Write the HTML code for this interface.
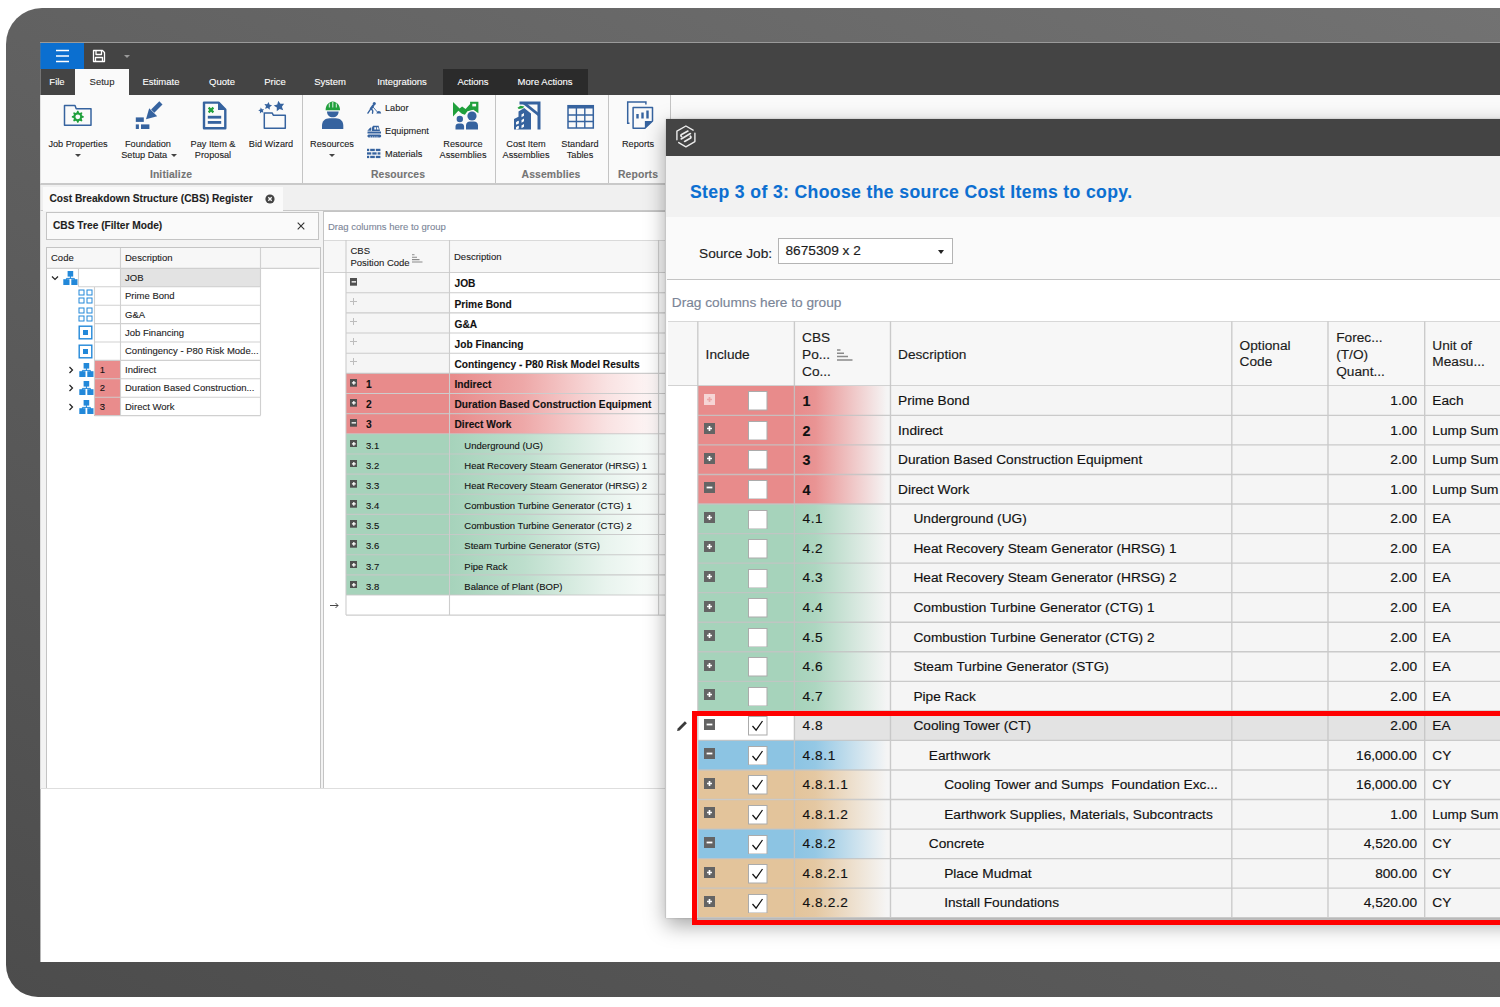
<!DOCTYPE html>
<html><head><meta charset="utf-8"><title>CBS Register</title>
<style>
*{box-sizing:border-box;margin:0;padding:0}
html,body{width:1500px;height:1007px;overflow:hidden;background:#fff}
body{position:relative;font-family:"Liberation Sans",sans-serif;font-size:9.5px;color:#1c1c1c}
.abs,.abs *{position:absolute}
#frame{left:6px;top:8px;width:1494px;height:989px;border-radius:36px 0 0 32px;background:linear-gradient(27deg,#4c4c4c,#727272)}
#screen{left:0;top:0;width:1500px;height:1007px;background:#fff;clip-path:inset(43px 0 45px 40.4px)}
#screen>div,#screen>span{position:absolute}
.t{position:absolute;white-space:nowrap;line-height:12px;-webkit-text-stroke:.1px currentColor}
.c{transform:translateX(-50%);text-align:center}
#screen .tab{color:#fff}
.rsep{width:1px;top:95px;height:88px;background:#c4c4c4}
.dd{width:0;height:0;border:3px solid transparent;border-top:3px solid #444;border-bottom:0}
#screen .gl{color:#747474;font-size:10.4px;letter-spacing:.12px}
.d{font-size:13.7px;line-height:16px;-webkit-text-stroke:.16px currentColor}
.b{font-weight:bold;font-size:10.2px}
</style></head><body>
<div id="frame" class="abs"></div>
<div class="abs" style="left:40px;top:42px;width:1460px;height:1px;background:#9a9a9a"></div>
<div id="screen" class="abs">
<div style="left:40px;top:43px;width:1460px;height:52px;background:#444"></div>
<div style="left:40px;top:43px;width:44px;height:26px;background:#0b6fd0"></div>
<svg style="left:55px;top:49px" width="15" height="14" viewBox="0 0 15 14"><path d="M1 1.5h13M1 7h13M1 12.5h13" stroke="#fff" stroke-width="1.6" fill="none"/></svg>
<svg style="left:92px;top:49px" width="14" height="14" viewBox="0 0 14 14"><path d="M1.5 1.5h9l2 2v9h-11z M4 1.5v4h5.5v-4 M3.5 12.5v-4h7v4" stroke="#fff" stroke-width="1.3" fill="none" stroke-linejoin="round"/></svg>
<div style="left:124px;top:55px;width:0;height:0;border:3px solid transparent;border-top:3px solid #9a9a9a;border-bottom:0"></div>
<div style="left:443px;top:69px;width:145px;height:26px;background:#2b2b2b"></div>
<div style="left:75px;top:69px;width:54px;height:26px;background:#fafafa"></div>
<span class="t c tab" style="left:57px;top:76px">File</span>
<span class="t c tab" style="left:102px;top:76px;color:#2b2b2b">Setup</span>
<span class="t c tab" style="left:161px;top:76px">Estimate</span>
<span class="t c tab" style="left:222px;top:76px">Quote</span>
<span class="t c tab" style="left:275px;top:76px">Price</span>
<span class="t c tab" style="left:330px;top:76px">System</span>
<span class="t c tab" style="left:402px;top:76px">Integrations</span>
<span class="t c tab" style="left:473px;top:76px">Actions</span>
<span class="t c tab" style="left:545px;top:76px">More Actions</span>

<div style="left:40px;top:95px;width:1460px;height:89px;background:#fafafa"></div>
<div style="left:40px;top:183px;width:1460px;height:2px;background:#c9c9c9"></div>
<div class="rsep" style="left:302px"></div><div class="rsep" style="left:495px"></div><div class="rsep" style="left:608px"></div><div class="rsep" style="left:670px"></div>
<svg style="left:41px;top:95px" width="640" height="70" viewBox="41 95 640 70">
<!-- job properties -->
<path d="M64.5 105.5h10.5l1.2 3.2h14.8v16.6h-26.5z" fill="none" stroke="#36639f" stroke-width="1.5" stroke-linejoin="round"/>
<path d="M83.77,116.21 L83.77,117.39 L82.01,118.08 L81.68,118.87 L82.44,120.61 L81.61,121.44 L79.87,120.68 L79.08,121.01 L78.39,122.77 L77.21,122.77 L76.52,121.01 L75.73,120.68 L73.99,121.44 L73.16,120.61 L73.92,118.87 L73.59,118.08 L71.83,117.39 L71.83,116.21 L73.59,115.52 L73.92,114.73 L73.16,112.99 L73.99,112.16 L75.73,112.92 L76.52,112.59 L77.21,110.83 L78.39,110.83 L79.08,112.59 L79.87,112.92 L81.61,112.16 L82.44,112.99 L81.68,114.73 L82.01,115.52Z" fill="#20a03c"/><circle cx="77.8" cy="116.8" r="2.4" fill="#fafafa"/>
<!-- foundation -->
<path d="M159.3 101.2l3.2 3.2-8.2 8.4-3.2-3.2z" fill="#36639f"/><path d="M146 119.2l3.2-11 8 8z" fill="#36639f"/>
<rect x="135.8" y="117.4" width="8" height="4.5" fill="#36639f"/><rect x="135.8" y="124.4" width="3.1" height="4.6" fill="#36639f"/><rect x="141" y="124.4" width="8.4" height="4.6" fill="#36639f"/>
<!-- pay item -->
<path d="M204 102.6h14.5l6.8 7v18.6h-21.3z" fill="#fafafa" stroke="#36639f" stroke-width="2.4" stroke-linejoin="round"/>
<path d="M218 102v8h7.5z" fill="#36639f"/>
<path d="M208.6 107.6l4.8 4.8m0-4.8l-4.8 4.8" stroke="#20a03c" stroke-width="2.2"/>
<rect x="207.8" y="115.8" width="13.4" height="2.8" fill="#36639f"/><rect x="207.8" y="121" width="13.4" height="2.8" fill="#36639f"/>
<!-- bid wizard -->
<path d="M264.3 112.9h7.800l1.200 2.300h12v13.100h-21z" fill="none" stroke="#36639f" stroke-width="1.500" stroke-linejoin="round"/>
<path d="M278.23,100.79 L280.38,103.87 L284.14,103.67 L281.87,106.68 L283.23,110.19 L279.67,108.96 L276.75,111.33 L276.82,107.57 L273.65,105.52 L277.26,104.42Z" fill="#36639f"/><path d="M268.71,101.96 L269.44,104.61 L272.06,105.43 L269.77,106.94 L269.80,109.69 L267.65,107.97 L265.05,108.85 L266.02,106.28 L264.38,104.08 L267.12,104.20Z" fill="#36639f"/><path d="M260.76,107.55 L261.96,109.25 L264.04,109.14 L262.79,110.81 L263.53,112.75 L261.56,112.08 L259.94,113.39 L259.98,111.30 L258.23,110.17 L260.22,109.56Z" fill="#36639f"/>
<!-- resources worker -->
<path d="M325.6 110.2c0-4.5 2.6-8.2 7.2-8.6 4.6.4 7.2 4.1 7.2 8.6z" fill="#20a03c"/><path d="M329.3 103.5v4M332.8 102v5.5M336.3 103.5v4" stroke="#fafafa" stroke-width="0.9"/>
<path d="M327 111.4h11.6c0 3.6-2.6 5.8-5.8 5.8s-5.800-2.200-5.800-5.800z" fill="#36639f"/>
<path d="M322 129v-3.500c0-4.500 3.200-7.300 7.500-7.300h6.300c4.300 0 7.500 2.800 7.500 7.300v3.500z" fill="#36639f"/>
<!-- labor -->
<circle cx="374.300" cy="103.600" r="1.550" fill="#36639f"/><path d="M373.300 105.400L370.900 108.700" stroke="#36639f" stroke-width="2.300" stroke-linecap="round" fill="none"/><path d="M370.900 108.700L367.900 113.100M371.200 108.500L372.800 110.800L372.500 113.200" stroke="#36639f" stroke-width="1.400" stroke-linecap="round" stroke-linejoin="round" fill="none"/><path d="M372.400 106.300L377.600 112.200" stroke="#36639f" stroke-width=".9" fill="none"/><path d="M376.300 113.400h4.900q-.4-2.400-2.600-2.300-1.700.2-2.300 2.300z" fill="#36639f"/>
<!-- equipment -->
<path d="M367.500 131.500h13.500v1.900h-13.500z" fill="#36639f"/><path d="M368.700 134.400h11.200c1.700 0 1.700 3 0 3h-11.200c-1.700 0-1.700-3 0-3z" fill="#36639f"/><path d="M369.800 137h9" stroke="#fafafa" stroke-width=".8" stroke-dasharray="1.200 1"/>
<path d="M372 131v-3.500l1-1.700h5.600l1.400 5.200z" fill="#36639f"/><path d="M374.300 127.200h1.900v2.300h-1.900z M377 127.200h1.200l.6 2.300H377z" fill="#fafafa"/><path d="M367.300 130.800l3-3.400 1 .3v3.100z" fill="#36639f"/>
<!-- materials -->
<g fill="#36639f"><rect x="367" y="148.800" width="2.200" height="2.300"/><rect x="370.200" y="148.800" width="4.600" height="2.300"/><rect x="375.800" y="148.800" width="4.600" height="2.300"/>
<rect x="367" y="152.300" width="4.300" height="2.300"/><rect x="372.300" y="152.300" width="4.300" height="2.300"/><rect x="377.600" y="152.300" width="2.800" height="2.300"/>
<rect x="367" y="155.800" width="2.200" height="2.300"/><rect x="370.200" y="155.800" width="4.600" height="2.300"/><rect x="375.800" y="155.800" width="4.600" height="2.300"/></g>
<!-- resource assemblies -->
<path d="M453 102l6.600 6.500 2.500-2 3.500 2.500 4.500-5v-2.200h8.300v11.500l-5-3.500-6 1.500-2.500 3.500-3-1-3.500-3-5.400 5.700z" fill="#20a03c"/><rect x="472.300" y="103.800" width="3.800" height="2.600" fill="#fafafa"/>
<circle cx="472" cy="116" r="5.600" fill="#fafafa"/><circle cx="472" cy="116" r="4.600" fill="#36639f"/><circle cx="459.800" cy="119" r="3.200" fill="#36639f"/>
<path d="M455.500 129.400v-3c0-2 1.300-3 3-3h2.600c1.700 0 3 1 3 3v3z M466 129.400v-4c0-2.600 1.800-4 4-4h4c2.200 0 4 1.400 4 4v4z" fill="#36639f"/>
<!-- cost item assemblies -->
<path d="M519.500 101.400h21v28h-3v-25h-18z" fill="#36639f"/><path d="M521 102.500l17 13.500v-3.600l-12.500-10z" fill="#36639f"/>
<path d="M514 129.400v-10.500l4.500-2.200v-5.200l5.700-3.500 6.800 5.500v15.900z" fill="#36639f"/>
<g fill="#fafafa" transform="skewY(-28)"><rect x="516" y="396.500" width="2.400" height="2.300"/><rect x="516" y="401.500" width="2.400" height="2.300"/></g>
<g fill="#fafafa"><path d="M521.500 114.500l2.500-1.500v2.700l-2.500 1.500z M521.500 120l2.500-1.500v2.700l-2.500 1.500z M521.500 125.500l2.500-1.500v2.700l-2.500 1.500z M516.500 122l2.300-1.300v2.700l-2.300 1.300z M516.500 127l2.300-1.300v2.700l-2.300 1.300z"/></g>
<path d="M517.500 107.800l3-2 3.800.6-1.500 1.800-4 .8z" fill="#20a03c"/>
<!-- standard tables -->
<rect x="568" y="105.700" width="25.300" height="22.300" fill="#fafafa" stroke="#36639f" stroke-width="1.500"/><rect x="568" y="105.200" width="25.300" height="3.300" fill="#36639f"/>
<path d="M576.400 108v20M584.800 108v20M568 115h25.300M568 121.500h25.300" stroke="#36639f" stroke-width="1.400"/>
<!-- reports -->
<path d="M629.500 123.200h-1.800v-21.200h18.200v2.500" fill="none" stroke="#36639f" stroke-width="1.500"/>
<path d="M633.100 107.500h19.400v13.500l-7.600 7.300h-11.800z" fill="#fafafa" stroke="#36639f" stroke-width="1.500" stroke-linejoin="round"/><path d="M652.500 121l-7.600 7.300v-7.300z" fill="#36639f"/>
<rect x="636.300" y="114" width="2.400" height="4.500" fill="#36639f"/><rect x="641.300" y="112.500" width="2.400" height="6" fill="#36639f"/><rect x="646.300" y="110.500" width="2.400" height="8" fill="#36639f"/>
</svg>
<span class="t c" style="font-size:9.2px;left:78px;top:139.3px;line-height:11px">Job Properties</span><i class="dd" style="left:75px;top:154.300px"></i>
<span class="t c" style="font-size:9.2px;left:148px;top:139.3px;line-height:11px">Foundation<br>Setup Data&nbsp;&nbsp;&nbsp;</span><i class="dd" style="left:171px;top:154.300px"></i>
<span class="t c" style="font-size:9.2px;left:213px;top:139.3px;line-height:11px">Pay Item &amp;<br>Proposal</span>
<span class="t c" style="font-size:9.2px;left:271px;top:139.3px;line-height:11px">Bid Wizard</span>
<span class="t c" style="font-size:9.2px;left:332px;top:139.3px;line-height:11px">Resources</span><i class="dd" style="left:329px;top:154px"></i>
<span class="t" style="font-size:9.2px;left:385px;top:101.900px">Labor</span><span class="t" style="font-size:9.2px;left:385px;top:124.600px">Equipment</span><span class="t" style="font-size:9.2px;left:385px;top:147.500px">Materials</span>
<span class="t c" style="font-size:9.2px;left:463px;top:139.3px;line-height:11px">Resource<br>Assemblies</span>
<span class="t c" style="font-size:9.2px;left:526px;top:139.3px;line-height:11px">Cost Item<br>Assemblies</span>
<span class="t c" style="font-size:9.2px;left:580px;top:139.3px;line-height:11px">Standard<br>Tables</span>
<span class="t c" style="font-size:9.2px;left:638px;top:139.3px;line-height:11px">Reports</span>
<span class="t c b gl" style="left:171px;top:169.200px">Initialize</span><span class="t c b gl" style="left:398px;top:169.200px">Resources</span><span class="t c b gl" style="left:551px;top:169.200px">Assemblies</span><span class="t c b gl" style="left:638px;top:169.200px">Reports</span>

<div style="left:40px;top:185px;width:1460px;height:26px;background:#f0f0f0"></div>
<div style="left:40px;top:210px;width:1460px;height:1.500px;background:#c8c8c8"></div>
<div style="left:40px;top:211px;width:1460px;height:578px;background:#f3f3f3"></div>
<div style="left:40px;top:788px;width:1460px;height:1px;background:#dcdcdc"></div>
<div style="left:42.500px;top:187px;width:240px;height:24px;background:#fafafa"></div>
<span class="t b" style="left:49.5px;top:193.1px;color:#1e1e1e">Cost Breakdown Structure (CBS) Register</span>
<svg style="left:265px;top:194px" width="10" height="10" viewBox="0 0 10 10"><circle cx="5" cy="5" r="4.600" fill="#454545"/><path d="M3.300 3.300l3.400 3.400m0-3.400l-3.400 3.400" stroke="#fafafa" stroke-width="1.300"/></svg>
<div style="left:46px;top:211.500px;width:273px;height:28px;background:#fafafa;border:1px solid #c4c4c4"></div>
<span class="t b" style="left:53px;top:220.400px;color:#1e1e1e">CBS Tree (Filter Mode)</span>
<svg style="left:297px;top:222px" width="8" height="8" viewBox="0 0 8 8"><path d="M.7.700l6.600 6.600m0-6.600l-6.600 6.600" stroke="#333" stroke-width="1.100"/></svg>
<div style="left:45.500px;top:247px;width:275px;height:542px;background:#fff;border:1px solid #c4c4c4;border-bottom:0"></div>
<div style="left:46.500px;top:248px;width:273px;height:20.3px;background:#f7f7f7"></div>
<span class="t" style="left:51px;top:252.200px">Code</span><span class="t" style="left:125px;top:252.200px">Description</span>
<div style="left:121px;top:268.4px;width:139.5px;height:18.4px;background:#e3e3e3"></div>
<div style="left:94.3px;top:360.4px;width:26.200000000000003px;height:18.4px;background:#e98c8c"></div>
<div style="left:94.3px;top:378.8px;width:26.200000000000003px;height:18.4px;background:#e98c8c"></div>
<div style="left:94.3px;top:397.2px;width:26.200000000000003px;height:18.4px;background:#e98c8c"></div>
<svg style="left:0;top:0" width="400" height="500" viewBox="0 0 400 500"><path d="M46.500 268.400H319.500M120.500 248V268.400M260.500 248V268.400M78.5 286.80H260.500M78.5 268.40V286.80M120.500 268.40V286.80M260.500 268.40V286.80M94.5 305.20H260.500M94.5 286.80V305.20M120.500 286.80V305.20M260.500 286.80V305.20M94.5 323.60H260.500M94.5 305.20V323.60M120.500 305.20V323.60M260.500 305.20V323.60M94.5 342.00H260.500M94.5 323.60V342.00M120.500 323.60V342.00M260.500 323.60V342.00M94.5 360.40H260.500M94.5 342.00V360.40M120.500 342.00V360.40M260.500 342.00V360.40M94.5 378.80H260.500M94.5 360.40V378.80M120.500 360.40V378.80M260.500 360.40V378.80M94.5 397.20H260.500M94.5 378.80V397.20M120.500 378.80V397.20M260.500 378.80V397.20M94.5 415.60H260.500M94.5 397.20V415.60M120.500 397.20V415.60M260.500 397.20V415.60" fill="none" stroke="rgba(206,206,206,.95)" stroke-width="1.1"/></svg>
<span class="t" style="left:125px;top:271.7px">JOB</span>
<svg style="left:62.5px;top:270.7px" width="15" height="14" viewBox="0 0 15 14"><path d="M7.4 5v2.400M3.400 9v-1.600h8v1.600" fill="none" stroke="#2288d9" stroke-width="1"/><rect x="4.600" y="0" width="5.600" height="5.600" fill="#2288d9"/><rect x="0.300" y="8.200" width="6.200" height="5.800" fill="#2288d9"/><rect x="8.300" y="8.200" width="6.200" height="5.800" fill="#2288d9"/></svg>
<svg style="left:50.5px;top:275.2px" width="8" height="6" viewBox="0 0 8 6"><path d="M1 1.500l3 3 3-3" fill="none" stroke="#222" stroke-width="1.200"/></svg>
<span class="t" style="left:125px;top:290.1px">Prime Bond</span>
<svg style="left:78.0px;top:288.6px" width="15" height="15" viewBox="0 0 15 15"><g fill="none" stroke="#2288d9" stroke-width="1"><rect x="1" y="1" width="5" height="5"/><rect x="9" y="1" width="5" height="5"/><rect x="1" y="9" width="5" height="5"/><rect x="9" y="9" width="5" height="5"/></g></svg>
<span class="t" style="left:125px;top:308.5px">G&amp;A</span>
<svg style="left:78.0px;top:307.0px" width="15" height="15" viewBox="0 0 15 15"><g fill="none" stroke="#2288d9" stroke-width="1"><rect x="1" y="1" width="5" height="5"/><rect x="9" y="1" width="5" height="5"/><rect x="1" y="9" width="5" height="5"/><rect x="9" y="9" width="5" height="5"/></g></svg>
<span class="t" style="left:125px;top:326.9px">Job Financing</span>
<svg style="left:78.0px;top:325.4px" width="15" height="15" viewBox="0 0 15 15"><rect x="1.200" y="1.200" width="12.600" height="12.600" fill="#fff" stroke="#2288d9" stroke-width="1.400"/><rect x="5" y="5" width="5" height="5" fill="#2288d9"/></svg>
<span class="t" style="left:125px;top:345.3px">Contingency - P80 Risk Mode...</span>
<svg style="left:78.0px;top:343.8px" width="15" height="15" viewBox="0 0 15 15"><rect x="1.200" y="1.200" width="12.600" height="12.600" fill="#fff" stroke="#2288d9" stroke-width="1.400"/><rect x="5" y="5" width="5" height="5" fill="#2288d9"/></svg>
<span class="t c" style="left:102.500px;top:363.7px;color:#111">1</span>
<span class="t" style="left:125px;top:363.7px">Indirect</span>
<svg style="left:78.5px;top:362.7px" width="15" height="14" viewBox="0 0 15 14"><path d="M7.4 5v2.400M3.400 9v-1.600h8v1.600" fill="none" stroke="#2288d9" stroke-width="1"/><rect x="4.600" y="0" width="5.600" height="5.600" fill="#2288d9"/><rect x="0.300" y="8.200" width="6.200" height="5.800" fill="#2288d9"/><rect x="8.300" y="8.200" width="6.200" height="5.800" fill="#2288d9"/></svg>
<svg style="left:67.5px;top:365.7px" width="6" height="8" viewBox="0 0 6 8"><path d="M1.500 1l3 3-3 3" fill="none" stroke="#222" stroke-width="1.200"/></svg>
<span class="t c" style="left:102.500px;top:382.1px;color:#111">2</span>
<span class="t" style="left:125px;top:382.1px">Duration Based Construction...</span>
<svg style="left:78.5px;top:381.1px" width="15" height="14" viewBox="0 0 15 14"><path d="M7.4 5v2.400M3.400 9v-1.600h8v1.600" fill="none" stroke="#2288d9" stroke-width="1"/><rect x="4.600" y="0" width="5.600" height="5.600" fill="#2288d9"/><rect x="0.300" y="8.200" width="6.200" height="5.800" fill="#2288d9"/><rect x="8.300" y="8.200" width="6.200" height="5.800" fill="#2288d9"/></svg>
<svg style="left:67.5px;top:384.1px" width="6" height="8" viewBox="0 0 6 8"><path d="M1.500 1l3 3-3 3" fill="none" stroke="#222" stroke-width="1.200"/></svg>
<span class="t c" style="left:102.500px;top:400.5px;color:#111">3</span>
<span class="t" style="left:125px;top:400.5px">Direct Work</span>
<svg style="left:78.5px;top:399.5px" width="15" height="14" viewBox="0 0 15 14"><path d="M7.4 5v2.400M3.400 9v-1.600h8v1.600" fill="none" stroke="#2288d9" stroke-width="1"/><rect x="4.600" y="0" width="5.600" height="5.600" fill="#2288d9"/><rect x="0.300" y="8.200" width="6.200" height="5.800" fill="#2288d9"/><rect x="8.300" y="8.200" width="6.200" height="5.800" fill="#2288d9"/></svg>
<svg style="left:67.5px;top:402.5px" width="6" height="8" viewBox="0 0 6 8"><path d="M1.500 1l3 3-3 3" fill="none" stroke="#222" stroke-width="1.200"/></svg>
<div style="left:323px;top:211px;width:360px;height:578px;background:#fff;border:1px solid #c4c4c4;border-bottom:0"></div>
<div style="left:324px;top:240px;width:341px;height:32.6px;background:#f7f7f7;border-top:1px solid #dadada;border-bottom:1px solid #d0d0d0"></div>
<div style="left:346px;top:272.60px;width:103px;height:20.15px;background:#f5f5f5"></div>
<div style="left:346px;top:292.75px;width:103px;height:20.15px;background:#f5f5f5"></div>
<div style="left:346px;top:312.90px;width:103px;height:20.15px;background:#f5f5f5"></div>
<div style="left:346px;top:333.05px;width:103px;height:20.15px;background:#f5f5f5"></div>
<div style="left:346px;top:353.20px;width:103px;height:20.15px;background:#f5f5f5"></div>
<div style="left:346px;top:373.35px;width:103px;height:20.15px;background:rgb(232,139,139)"></div>
<div style="left:449.5px;top:373.35px;width:209px;height:20.15px;background:linear-gradient(90deg,rgb(232,139,139) 0%,rgba(232,139,139,.75) 35%,rgba(232,139,139,.25) 75%,rgba(232,139,139,.05) 100%)"></div>
<div style="left:346px;top:393.50px;width:103px;height:20.15px;background:rgb(232,139,139)"></div>
<div style="left:449.5px;top:393.50px;width:209px;height:20.15px;background:linear-gradient(90deg,rgb(232,139,139) 0%,rgba(232,139,139,.75) 35%,rgba(232,139,139,.25) 75%,rgba(232,139,139,.05) 100%)"></div>
<div style="left:346px;top:413.65px;width:103px;height:20.15px;background:rgb(232,139,139)"></div>
<div style="left:449.5px;top:413.65px;width:209px;height:20.15px;background:linear-gradient(90deg,rgb(232,139,139) 0%,rgba(232,139,139,.75) 35%,rgba(232,139,139,.25) 75%,rgba(232,139,139,.05) 100%)"></div>
<div style="left:346px;top:433.80px;width:103px;height:20.15px;background:rgb(166,211,187)"></div>
<div style="left:449.5px;top:433.80px;width:209px;height:20.15px;background:linear-gradient(90deg,rgb(166,211,187) 0%,rgba(166,211,187,.75) 35%,rgba(166,211,187,.25) 75%,rgba(166,211,187,.05) 100%)"></div>
<div style="left:346px;top:453.95px;width:103px;height:20.15px;background:rgb(166,211,187)"></div>
<div style="left:449.5px;top:453.95px;width:209px;height:20.15px;background:linear-gradient(90deg,rgb(166,211,187) 0%,rgba(166,211,187,.75) 35%,rgba(166,211,187,.25) 75%,rgba(166,211,187,.05) 100%)"></div>
<div style="left:346px;top:474.10px;width:103px;height:20.15px;background:rgb(166,211,187)"></div>
<div style="left:449.5px;top:474.10px;width:209px;height:20.15px;background:linear-gradient(90deg,rgb(166,211,187) 0%,rgba(166,211,187,.75) 35%,rgba(166,211,187,.25) 75%,rgba(166,211,187,.05) 100%)"></div>
<div style="left:346px;top:494.25px;width:103px;height:20.15px;background:rgb(166,211,187)"></div>
<div style="left:449.5px;top:494.25px;width:209px;height:20.15px;background:linear-gradient(90deg,rgb(166,211,187) 0%,rgba(166,211,187,.75) 35%,rgba(166,211,187,.25) 75%,rgba(166,211,187,.05) 100%)"></div>
<div style="left:346px;top:514.40px;width:103px;height:20.15px;background:rgb(166,211,187)"></div>
<div style="left:449.5px;top:514.40px;width:209px;height:20.15px;background:linear-gradient(90deg,rgb(166,211,187) 0%,rgba(166,211,187,.75) 35%,rgba(166,211,187,.25) 75%,rgba(166,211,187,.05) 100%)"></div>
<div style="left:346px;top:534.55px;width:103px;height:20.15px;background:rgb(166,211,187)"></div>
<div style="left:449.5px;top:534.55px;width:209px;height:20.15px;background:linear-gradient(90deg,rgb(166,211,187) 0%,rgba(166,211,187,.75) 35%,rgba(166,211,187,.25) 75%,rgba(166,211,187,.05) 100%)"></div>
<div style="left:346px;top:554.70px;width:103px;height:20.15px;background:rgb(166,211,187)"></div>
<div style="left:449.5px;top:554.70px;width:209px;height:20.15px;background:linear-gradient(90deg,rgb(166,211,187) 0%,rgba(166,211,187,.75) 35%,rgba(166,211,187,.25) 75%,rgba(166,211,187,.05) 100%)"></div>
<div style="left:346px;top:574.85px;width:103px;height:20.15px;background:rgb(166,211,187)"></div>
<div style="left:449.5px;top:574.85px;width:209px;height:20.15px;background:linear-gradient(90deg,rgb(166,211,187) 0%,rgba(166,211,187,.75) 35%,rgba(166,211,187,.25) 75%,rgba(166,211,187,.05) 100%)"></div>
<svg style="left:0;top:0" width="1500" height="1007" viewBox="0 0 1500 1007"><path d="M346 292.75H666M346 312.90H666M346 333.05H666M346 353.20H666M346 373.35H666M346 393.50H666M346 413.65H666M346 433.80H666M346 453.95H666M346 474.10H666M346 494.25H666M346 514.40H666M346 534.55H666M346 554.70H666M346 574.85H666M346 595.00H666M346 615.15H666M346 240V615.1M449.5 240V615.1M658.6 240V615.1" fill="none" stroke="rgba(200,200,200,.9)" stroke-width="1.1"/></svg>
<span class="t" style="left:328px;top:221px;color:#7b8597">Drag columns here to group</span>
<span class="t" style="left:350.5px;top:245.3px;line-height:11.6px">CBS<br>Position Code</span>
<svg style="left:412px;top:253.5px" width="11" height="9" viewBox="0 0 11 9"><path d="M0 .8h2.5M0 3.2h5M0 5.600h7.5M0 8h10.5" stroke="#8a8a8a" stroke-width="1.1"/></svg>
<span class="t" style="left:454px;top:250.5px">Description</span>
<span class="t b" style="left:454.5px;top:278.40px;color:#111">JOB</span>
<svg style="left:349.7px;top:278.4px" width="7.7" height="7.7" viewBox="0 0 8 8"><rect width="8" height="8" fill="#4f4f4f"/><path d="M1.7 4h4.6" stroke="#fff" stroke-width="1.4"/></svg>
<span class="t b" style="left:454.5px;top:298.55px;color:#111">Prime Bond</span>
<svg style="left:350px;top:297.75px" width="7" height="7" viewBox="0 0 7 7"><path d="M0 3.5h7M3.5 0v7" stroke="#bdbdbd" stroke-width="1"/></svg>
<span class="t b" style="left:454.5px;top:318.70px;color:#111">G&amp;A</span>
<svg style="left:350px;top:317.90px" width="7" height="7" viewBox="0 0 7 7"><path d="M0 3.5h7M3.5 0v7" stroke="#bdbdbd" stroke-width="1"/></svg>
<span class="t b" style="left:454.5px;top:338.85px;color:#111">Job Financing</span>
<svg style="left:350px;top:338.05px" width="7" height="7" viewBox="0 0 7 7"><path d="M0 3.5h7M3.5 0v7" stroke="#bdbdbd" stroke-width="1"/></svg>
<span class="t b" style="left:454.5px;top:359.00px;color:#111">Contingency - P80 Risk Model Results</span>
<svg style="left:350px;top:358.20px" width="7" height="7" viewBox="0 0 7 7"><path d="M0 3.5h7M3.5 0v7" stroke="#bdbdbd" stroke-width="1"/></svg>
<span class="t b" style="left:366px;top:379.15px;color:#111">1</span>
<span class="t b" style="left:454.5px;top:379.15px;color:#111">Indirect</span>
<svg style="left:349.7px;top:379.15px" width="7.7" height="7.7" viewBox="0 0 8 8"><rect width="8" height="8" fill="#4f4f4f"/><path d="M2 4h4M4 2v4" stroke="#fff" stroke-width="1.3"/></svg>
<span class="t b" style="left:366px;top:399.30px;color:#111">2</span>
<span class="t b" style="left:454.5px;top:399.30px;color:#111">Duration Based Construction Equipment</span>
<svg style="left:349.7px;top:399.3px" width="7.7" height="7.7" viewBox="0 0 8 8"><rect width="8" height="8" fill="#4f4f4f"/><path d="M2 4h4M4 2v4" stroke="#fff" stroke-width="1.3"/></svg>
<span class="t b" style="left:366px;top:419.45px;color:#111">3</span>
<span class="t b" style="left:454.5px;top:419.45px;color:#111">Direct Work</span>
<svg style="left:349.7px;top:419.45px" width="7.7" height="7.7" viewBox="0 0 8 8"><rect width="8" height="8" fill="#4f4f4f"/><path d="M1.7 4h4.6" stroke="#fff" stroke-width="1.4"/></svg>
<span class="t" style="left:366px;top:439.60px;color:#111">3.1</span>
<span class="t" style="left:464.3px;top:439.60px;color:#111">Underground (UG)</span>
<svg style="left:349.7px;top:439.6px" width="7.7" height="7.7" viewBox="0 0 8 8"><rect width="8" height="8" fill="#4f4f4f"/><path d="M2 4h4M4 2v4" stroke="#fff" stroke-width="1.3"/></svg>
<span class="t" style="left:366px;top:459.75px;color:#111">3.2</span>
<span class="t" style="left:464.3px;top:459.75px;color:#111">Heat Recovery Steam Generator (HRSG) 1</span>
<svg style="left:349.7px;top:459.75px" width="7.7" height="7.7" viewBox="0 0 8 8"><rect width="8" height="8" fill="#4f4f4f"/><path d="M2 4h4M4 2v4" stroke="#fff" stroke-width="1.3"/></svg>
<span class="t" style="left:366px;top:479.90px;color:#111">3.3</span>
<span class="t" style="left:464.3px;top:479.90px;color:#111">Heat Recovery Steam Generator (HRSG) 2</span>
<svg style="left:349.7px;top:479.9px" width="7.7" height="7.7" viewBox="0 0 8 8"><rect width="8" height="8" fill="#4f4f4f"/><path d="M2 4h4M4 2v4" stroke="#fff" stroke-width="1.3"/></svg>
<span class="t" style="left:366px;top:500.05px;color:#111">3.4</span>
<span class="t" style="left:464.3px;top:500.05px;color:#111">Combustion Turbine Generator (CTG) 1</span>
<svg style="left:349.7px;top:500.05px" width="7.7" height="7.7" viewBox="0 0 8 8"><rect width="8" height="8" fill="#4f4f4f"/><path d="M2 4h4M4 2v4" stroke="#fff" stroke-width="1.3"/></svg>
<span class="t" style="left:366px;top:520.20px;color:#111">3.5</span>
<span class="t" style="left:464.3px;top:520.20px;color:#111">Combustion Turbine Generator (CTG) 2</span>
<svg style="left:349.7px;top:520.2px" width="7.7" height="7.7" viewBox="0 0 8 8"><rect width="8" height="8" fill="#4f4f4f"/><path d="M2 4h4M4 2v4" stroke="#fff" stroke-width="1.3"/></svg>
<span class="t" style="left:366px;top:540.35px;color:#111">3.6</span>
<span class="t" style="left:464.3px;top:540.35px;color:#111">Steam Turbine Generator (STG)</span>
<svg style="left:349.7px;top:540.35px" width="7.7" height="7.7" viewBox="0 0 8 8"><rect width="8" height="8" fill="#4f4f4f"/><path d="M2 4h4M4 2v4" stroke="#fff" stroke-width="1.3"/></svg>
<span class="t" style="left:366px;top:560.50px;color:#111">3.7</span>
<span class="t" style="left:464.3px;top:560.50px;color:#111">Pipe Rack</span>
<svg style="left:349.7px;top:560.5px" width="7.7" height="7.7" viewBox="0 0 8 8"><rect width="8" height="8" fill="#4f4f4f"/><path d="M2 4h4M4 2v4" stroke="#fff" stroke-width="1.3"/></svg>
<span class="t" style="left:366px;top:580.65px;color:#111">3.8</span>
<span class="t" style="left:464.3px;top:580.65px;color:#111">Balance of Plant (BOP)</span>
<svg style="left:349.7px;top:580.65px" width="7.7" height="7.7" viewBox="0 0 8 8"><rect width="8" height="8" fill="#4f4f4f"/><path d="M2 4h4M4 2v4" stroke="#fff" stroke-width="1.3"/></svg>
<svg style="left:330px;top:601.50px" width="9" height="7" viewBox="0 0 9 7"><path d="M0 3.5h8M5.5 1l2.5 2.5-2.5 2.5" fill="none" stroke="#333" stroke-width="0.9"/></svg>
<div style="left:40px;top:788px;width:700px;height:1px;background:#dedede"></div>
</div>
<!--DIALOG-->
<div id="dialog" class="abs" style="left:0;top:0;width:1500px;height:1007px;clip-path:inset(43px 0 45px 40.4px)">
<div id="dlg" style="left:665.5px;top:119px;width:900px;height:799px;background:#fafafa;box-shadow:0 7px 20px rgba(0,0,0,.36),0 0 2px rgba(0,0,0,.2)"></div>
<div style="left:665.5px;top:119px;width:900px;height:36.5px;background:#444"></div>
<div style="left:665.5px;top:155.5px;width:900px;height:61px;background:#f2f2f2"></div>
<div style="left:778px;top:238px;width:175px;height:25.5px;background:#fff;border:1px solid #b4b4b4"></div>
<div style="left:664.7px;top:155.5px;width:1.8px;height:762.5px;background:#c6c6c6"></div>
<div style="left:667px;top:279px;width:900px;height:639px;background:#fff;border-top:1px solid #c4c4c4"></div>
<div style="left:668px;top:321.400px;width:900px;height:64.400px;background:#f7f7f7;border-top:1px solid #d8d8d8;border-bottom:1px solid #d2d2d2"></div>
<div style="left:794.4px;top:385.80px;width:720px;height:29.55px;background:#f5f5f5"></div>
<div style="left:698px;top:385.80px;width:96.5px;height:29.55px;background:rgb(232,139,139)"></div>
<div style="left:794.4px;top:385.80px;width:96px;height:29.55px;background:linear-gradient(90deg,rgb(232,139,139) 0%,rgba(232,139,139,.92) 22%,rgba(232,139,139,.45) 60%,rgba(232,139,139,0) 97%)"></div>
<div style="left:794.4px;top:415.35px;width:720px;height:29.55px;background:#f5f5f5"></div>
<div style="left:698px;top:415.35px;width:96.5px;height:29.55px;background:rgb(232,139,139)"></div>
<div style="left:794.4px;top:415.35px;width:96px;height:29.55px;background:linear-gradient(90deg,rgb(232,139,139) 0%,rgba(232,139,139,.92) 22%,rgba(232,139,139,.45) 60%,rgba(232,139,139,0) 97%)"></div>
<div style="left:794.4px;top:444.90px;width:720px;height:29.55px;background:#f5f5f5"></div>
<div style="left:698px;top:444.90px;width:96.5px;height:29.55px;background:rgb(232,139,139)"></div>
<div style="left:794.4px;top:444.90px;width:96px;height:29.55px;background:linear-gradient(90deg,rgb(232,139,139) 0%,rgba(232,139,139,.92) 22%,rgba(232,139,139,.45) 60%,rgba(232,139,139,0) 97%)"></div>
<div style="left:794.4px;top:474.45px;width:720px;height:29.55px;background:#f5f5f5"></div>
<div style="left:698px;top:474.45px;width:96.5px;height:29.55px;background:rgb(232,139,139)"></div>
<div style="left:794.4px;top:474.45px;width:96px;height:29.55px;background:linear-gradient(90deg,rgb(232,139,139) 0%,rgba(232,139,139,.92) 22%,rgba(232,139,139,.45) 60%,rgba(232,139,139,0) 97%)"></div>
<div style="left:794.4px;top:504.00px;width:720px;height:29.55px;background:#f5f5f5"></div>
<div style="left:698px;top:504.00px;width:96.5px;height:29.55px;background:rgb(166,211,187)"></div>
<div style="left:794.4px;top:504.00px;width:96px;height:29.55px;background:linear-gradient(90deg,rgb(166,211,187) 0%,rgba(166,211,187,.92) 22%,rgba(166,211,187,.45) 60%,rgba(166,211,187,0) 97%)"></div>
<div style="left:794.4px;top:533.55px;width:720px;height:29.55px;background:#f5f5f5"></div>
<div style="left:698px;top:533.55px;width:96.5px;height:29.55px;background:rgb(166,211,187)"></div>
<div style="left:794.4px;top:533.55px;width:96px;height:29.55px;background:linear-gradient(90deg,rgb(166,211,187) 0%,rgba(166,211,187,.92) 22%,rgba(166,211,187,.45) 60%,rgba(166,211,187,0) 97%)"></div>
<div style="left:794.4px;top:563.10px;width:720px;height:29.55px;background:#f5f5f5"></div>
<div style="left:698px;top:563.10px;width:96.5px;height:29.55px;background:rgb(166,211,187)"></div>
<div style="left:794.4px;top:563.10px;width:96px;height:29.55px;background:linear-gradient(90deg,rgb(166,211,187) 0%,rgba(166,211,187,.92) 22%,rgba(166,211,187,.45) 60%,rgba(166,211,187,0) 97%)"></div>
<div style="left:794.4px;top:592.65px;width:720px;height:29.55px;background:#f5f5f5"></div>
<div style="left:698px;top:592.65px;width:96.5px;height:29.55px;background:rgb(166,211,187)"></div>
<div style="left:794.4px;top:592.65px;width:96px;height:29.55px;background:linear-gradient(90deg,rgb(166,211,187) 0%,rgba(166,211,187,.92) 22%,rgba(166,211,187,.45) 60%,rgba(166,211,187,0) 97%)"></div>
<div style="left:794.4px;top:622.20px;width:720px;height:29.55px;background:#f5f5f5"></div>
<div style="left:698px;top:622.20px;width:96.5px;height:29.55px;background:rgb(166,211,187)"></div>
<div style="left:794.4px;top:622.20px;width:96px;height:29.55px;background:linear-gradient(90deg,rgb(166,211,187) 0%,rgba(166,211,187,.92) 22%,rgba(166,211,187,.45) 60%,rgba(166,211,187,0) 97%)"></div>
<div style="left:794.4px;top:651.75px;width:720px;height:29.55px;background:#f5f5f5"></div>
<div style="left:698px;top:651.75px;width:96.5px;height:29.55px;background:rgb(166,211,187)"></div>
<div style="left:794.4px;top:651.75px;width:96px;height:29.55px;background:linear-gradient(90deg,rgb(166,211,187) 0%,rgba(166,211,187,.92) 22%,rgba(166,211,187,.45) 60%,rgba(166,211,187,0) 97%)"></div>
<div style="left:794.4px;top:681.30px;width:720px;height:29.55px;background:#f5f5f5"></div>
<div style="left:698px;top:681.30px;width:96.5px;height:29.55px;background:rgb(166,211,187)"></div>
<div style="left:794.4px;top:681.30px;width:96px;height:29.55px;background:linear-gradient(90deg,rgb(166,211,187) 0%,rgba(166,211,187,.92) 22%,rgba(166,211,187,.45) 60%,rgba(166,211,187,0) 97%)"></div>
<div style="left:794.4px;top:710.85px;width:720px;height:29.55px;background:#e3e3e3"></div>
<div style="left:794.4px;top:740.40px;width:720px;height:29.55px;background:#f5f5f5"></div>
<div style="left:698px;top:740.40px;width:96.5px;height:29.55px;background:rgb(140,196,227)"></div>
<div style="left:794.4px;top:740.40px;width:96px;height:29.55px;background:linear-gradient(90deg,rgb(140,196,227) 0%,rgba(140,196,227,.92) 22%,rgba(140,196,227,.45) 60%,rgba(140,196,227,0) 97%)"></div>
<div style="left:794.4px;top:769.95px;width:720px;height:29.55px;background:#f5f5f5"></div>
<div style="left:698px;top:769.95px;width:96.5px;height:29.55px;background:rgb(227,196,155)"></div>
<div style="left:794.4px;top:769.95px;width:96px;height:29.55px;background:linear-gradient(90deg,rgb(227,196,155) 0%,rgba(227,196,155,.92) 22%,rgba(227,196,155,.45) 60%,rgba(227,196,155,0) 97%)"></div>
<div style="left:794.4px;top:799.50px;width:720px;height:29.55px;background:#f5f5f5"></div>
<div style="left:698px;top:799.50px;width:96.5px;height:29.55px;background:rgb(227,196,155)"></div>
<div style="left:794.4px;top:799.50px;width:96px;height:29.55px;background:linear-gradient(90deg,rgb(227,196,155) 0%,rgba(227,196,155,.92) 22%,rgba(227,196,155,.45) 60%,rgba(227,196,155,0) 97%)"></div>
<div style="left:794.4px;top:829.05px;width:720px;height:29.55px;background:#f5f5f5"></div>
<div style="left:698px;top:829.05px;width:96.5px;height:29.55px;background:rgb(140,196,227)"></div>
<div style="left:794.4px;top:829.05px;width:96px;height:29.55px;background:linear-gradient(90deg,rgb(140,196,227) 0%,rgba(140,196,227,.92) 22%,rgba(140,196,227,.45) 60%,rgba(140,196,227,0) 97%)"></div>
<div style="left:794.4px;top:858.60px;width:720px;height:29.55px;background:#f5f5f5"></div>
<div style="left:698px;top:858.60px;width:96.5px;height:29.55px;background:rgb(227,196,155)"></div>
<div style="left:794.4px;top:858.60px;width:96px;height:29.55px;background:linear-gradient(90deg,rgb(227,196,155) 0%,rgba(227,196,155,.92) 22%,rgba(227,196,155,.45) 60%,rgba(227,196,155,0) 97%)"></div>
<div style="left:794.4px;top:888.15px;width:720px;height:29.55px;background:#f5f5f5"></div>
<div style="left:698px;top:888.15px;width:96.5px;height:29.55px;background:rgb(227,196,155)"></div>
<div style="left:794.4px;top:888.15px;width:96px;height:29.55px;background:linear-gradient(90deg,rgb(227,196,155) 0%,rgba(227,196,155,.92) 22%,rgba(227,196,155,.45) 60%,rgba(227,196,155,0) 97%)"></div>
<svg style="left:0;top:0" width="1500" height="1007" viewBox="0 0 1500 1007"><path d="M698 415.35H1500M698 444.90H1500M698 474.45H1500M698 504.00H1500M698 533.55H1500M698 563.10H1500M698 592.65H1500M698 622.20H1500M698 651.75H1500M698 681.30H1500M698 710.85H1500M698 740.40H1500M698 769.95H1500M698 799.50H1500M698 829.05H1500M698 858.60H1500M698 888.15H1500M698 917.70H1500M697.8 321.4V918M794.4 321.4V918M890.5 321.4V918M1231.8 321.4V918M1328.0 321.4V918M1424.7 321.4V918" fill="none" stroke="rgba(196,196,196,.88)" stroke-width="1.35"/></svg>
<svg style="left:0;top:0" width="1500" height="200" viewBox="0 0 1500 200"><g fill="none" stroke="#ececec" stroke-width="1.4" stroke-linecap="round" stroke-linejoin="round"><path d="M694.9 133.1 L694.9 141.6 L685.9 146.8 L678.7 142.6"/><path d="M676.9 139.7 L676.9 131.2 L685.9 126.0 L693.1 130.2"/><path d="M687.9 131.1L681.6 134.4Q680.2 135.6 681.6 136.6" stroke-width="1.7"/><path d="M681.2 138.9L690.4 133.6" stroke-width="1.7"/><path d="M684.6 141.4L690.3 138.3Q691.6 137.2 690.3 136.200" stroke-width="1.700"/></g></svg>
<span class="t" id="hd" style="left:690px;top:182px;font-size:17.6px;letter-spacing:.37px;font-weight:bold;color:#0c6fd1;line-height:20px">Step 3 of 3: Choose the source Cost Items to copy.</span>
<span class="t d" style="left:699px;top:245.5px">Source Job:</span>
<span class="t d" style="left:785.5px;top:243.2px">8675309 x 2</span>
<div style="left:937.5px;top:249.5px;width:0;height:0;border:3.5px solid transparent;border-top:4px solid #222;border-bottom:0"></div>
<span class="t d" style="left:671.8px;top:294.5px;color:#7b8597">Drag columns here to group</span>
<span class="t d" style="left:705.6px;top:346.5px">Include</span>
<span class="t d" style="left:802px;top:330.3px;line-height:16.8px">CBS<br>Po...<br>Co...</span>
<svg style="left:837px;top:349px" width="16" height="12" viewBox="0 0 16 12"><path d="M0 1h3.500M0 4.300h7M0 7.600h11M0 10.900h15.500" stroke="#8a8a8a" stroke-width="1.500"/></svg>
<span class="t d" style="left:898px;top:346.5px">Description</span>
<span class="t d" style="left:1239.6px;top:338px;line-height:16.3px">Optional<br>Code</span>
<span class="t d" style="left:1336.2px;top:330.3px;line-height:16.8px">Forec...<br>(T/O)<br>Quant...</span>
<span class="t d" style="left:1432.3px;top:338px;line-height:16.3px">Unit of<br>Measu...</span>
<span class="t d" style="left:802.500px;top:393.10px;color:#111;letter-spacing:.6px;font-weight:bold;font-size:14.3px;">1</span>
<span class="t d" style="left:898.0px;top:393.10px;color:#111">Prime Bond</span>
<span class="t d" style="left:1300px;width:117px;text-align:right;top:393.10px;color:#111">1.00</span>
<span class="t d" style="left:1432.300px;top:393.10px;color:#111">Each</span>
<svg style="left:704px;top:393.7px" width="11" height="11" viewBox="0 0 8 8"><rect width="8" height="8" fill="#f6d5d5"/><path d="M2.2 4h3.600M4 2.200v3.600" stroke="#eda7a7" stroke-width="1.200"/></svg>
<svg style="left:748px;top:391.30px" width="19.500" height="19.500" viewBox="0 0 19.500 19.500"><rect x=".5" y=".5" width="18.500" height="18.500" fill="#fff" stroke="#ababab"/></svg>
<span class="t d" style="left:802.500px;top:422.65px;color:#111;letter-spacing:.6px;font-weight:bold;font-size:14.3px;">2</span>
<span class="t d" style="left:898.0px;top:422.65px;color:#111">Indirect</span>
<span class="t d" style="left:1300px;width:117px;text-align:right;top:422.65px;color:#111">1.00</span>
<span class="t d" style="left:1432.300px;top:422.65px;color:#111">Lump Sum</span>
<svg style="left:704px;top:423.25px" width="11" height="11" viewBox="0 0 8 8"><rect width="8" height="8" fill="#646464"/><path d="M2.2 4h3.6M4 2.2v3.6" stroke="#fff" stroke-width="1.2"/></svg>
<svg style="left:748px;top:420.85px" width="19.500" height="19.500" viewBox="0 0 19.500 19.500"><rect x=".5" y=".5" width="18.500" height="18.500" fill="#fff" stroke="#ababab"/></svg>
<span class="t d" style="left:802.500px;top:452.20px;color:#111;letter-spacing:.6px;font-weight:bold;font-size:14.3px;">3</span>
<span class="t d" style="left:898.0px;top:452.20px;color:#111">Duration Based Construction Equipment</span>
<span class="t d" style="left:1300px;width:117px;text-align:right;top:452.20px;color:#111">2.00</span>
<span class="t d" style="left:1432.300px;top:452.20px;color:#111">Lump Sum</span>
<svg style="left:704px;top:452.8px" width="11" height="11" viewBox="0 0 8 8"><rect width="8" height="8" fill="#646464"/><path d="M2.2 4h3.6M4 2.2v3.6" stroke="#fff" stroke-width="1.2"/></svg>
<svg style="left:748px;top:450.40px" width="19.500" height="19.500" viewBox="0 0 19.500 19.500"><rect x=".5" y=".5" width="18.500" height="18.500" fill="#fff" stroke="#ababab"/></svg>
<span class="t d" style="left:802.500px;top:481.75px;color:#111;letter-spacing:.6px;font-weight:bold;font-size:14.3px;">4</span>
<span class="t d" style="left:898.0px;top:481.75px;color:#111">Direct Work</span>
<span class="t d" style="left:1300px;width:117px;text-align:right;top:481.75px;color:#111">1.00</span>
<span class="t d" style="left:1432.300px;top:481.75px;color:#111">Lump Sum</span>
<svg style="left:704px;top:482.35px" width="11" height="11" viewBox="0 0 8 8"><rect width="8" height="8" fill="#646464"/><path d="M1.9 4h4.2" stroke="#fff" stroke-width="1.3"/></svg>
<svg style="left:748px;top:479.95px" width="19.500" height="19.500" viewBox="0 0 19.500 19.500"><rect x=".5" y=".5" width="18.500" height="18.500" fill="#fff" stroke="#ababab"/></svg>
<span class="t d" style="left:802.500px;top:511.30px;color:#111;letter-spacing:.6px;">4.1</span>
<span class="t d" style="left:913.4px;top:511.30px;color:#111">Underground (UG)</span>
<span class="t d" style="left:1300px;width:117px;text-align:right;top:511.30px;color:#111">2.00</span>
<span class="t d" style="left:1432.300px;top:511.30px;color:#111">EA</span>
<svg style="left:704px;top:511.9px" width="11" height="11" viewBox="0 0 8 8"><rect width="8" height="8" fill="#646464"/><path d="M2.2 4h3.6M4 2.2v3.6" stroke="#fff" stroke-width="1.2"/></svg>
<svg style="left:748px;top:509.50px" width="19.500" height="19.500" viewBox="0 0 19.500 19.500"><rect x=".5" y=".5" width="18.500" height="18.500" fill="#fff" stroke="#ababab"/></svg>
<span class="t d" style="left:802.500px;top:540.85px;color:#111;letter-spacing:.6px;">4.2</span>
<span class="t d" style="left:913.4px;top:540.85px;color:#111">Heat Recovery Steam Generator (HRSG) 1</span>
<span class="t d" style="left:1300px;width:117px;text-align:right;top:540.85px;color:#111">2.00</span>
<span class="t d" style="left:1432.300px;top:540.85px;color:#111">EA</span>
<svg style="left:704px;top:541.45px" width="11" height="11" viewBox="0 0 8 8"><rect width="8" height="8" fill="#646464"/><path d="M2.2 4h3.6M4 2.2v3.6" stroke="#fff" stroke-width="1.2"/></svg>
<svg style="left:748px;top:539.05px" width="19.500" height="19.500" viewBox="0 0 19.500 19.500"><rect x=".5" y=".5" width="18.500" height="18.500" fill="#fff" stroke="#ababab"/></svg>
<span class="t d" style="left:802.500px;top:570.40px;color:#111;letter-spacing:.6px;">4.3</span>
<span class="t d" style="left:913.4px;top:570.40px;color:#111">Heat Recovery Steam Generator (HRSG) 2</span>
<span class="t d" style="left:1300px;width:117px;text-align:right;top:570.40px;color:#111">2.00</span>
<span class="t d" style="left:1432.300px;top:570.40px;color:#111">EA</span>
<svg style="left:704px;top:571.0px" width="11" height="11" viewBox="0 0 8 8"><rect width="8" height="8" fill="#646464"/><path d="M2.2 4h3.6M4 2.2v3.6" stroke="#fff" stroke-width="1.2"/></svg>
<svg style="left:748px;top:568.60px" width="19.500" height="19.500" viewBox="0 0 19.500 19.500"><rect x=".5" y=".5" width="18.500" height="18.500" fill="#fff" stroke="#ababab"/></svg>
<span class="t d" style="left:802.500px;top:599.95px;color:#111;letter-spacing:.6px;">4.4</span>
<span class="t d" style="left:913.4px;top:599.95px;color:#111">Combustion Turbine Generator (CTG) 1</span>
<span class="t d" style="left:1300px;width:117px;text-align:right;top:599.95px;color:#111">2.00</span>
<span class="t d" style="left:1432.300px;top:599.95px;color:#111">EA</span>
<svg style="left:704px;top:600.55px" width="11" height="11" viewBox="0 0 8 8"><rect width="8" height="8" fill="#646464"/><path d="M2.2 4h3.6M4 2.2v3.6" stroke="#fff" stroke-width="1.2"/></svg>
<svg style="left:748px;top:598.15px" width="19.500" height="19.500" viewBox="0 0 19.500 19.500"><rect x=".5" y=".5" width="18.500" height="18.500" fill="#fff" stroke="#ababab"/></svg>
<span class="t d" style="left:802.500px;top:629.50px;color:#111;letter-spacing:.6px;">4.5</span>
<span class="t d" style="left:913.4px;top:629.50px;color:#111">Combustion Turbine Generator (CTG) 2</span>
<span class="t d" style="left:1300px;width:117px;text-align:right;top:629.50px;color:#111">2.00</span>
<span class="t d" style="left:1432.300px;top:629.50px;color:#111">EA</span>
<svg style="left:704px;top:630.1px" width="11" height="11" viewBox="0 0 8 8"><rect width="8" height="8" fill="#646464"/><path d="M2.2 4h3.6M4 2.2v3.6" stroke="#fff" stroke-width="1.2"/></svg>
<svg style="left:748px;top:627.70px" width="19.500" height="19.500" viewBox="0 0 19.500 19.500"><rect x=".5" y=".5" width="18.500" height="18.500" fill="#fff" stroke="#ababab"/></svg>
<span class="t d" style="left:802.500px;top:659.05px;color:#111;letter-spacing:.6px;">4.6</span>
<span class="t d" style="left:913.4px;top:659.05px;color:#111">Steam Turbine Generator (STG)</span>
<span class="t d" style="left:1300px;width:117px;text-align:right;top:659.05px;color:#111">2.00</span>
<span class="t d" style="left:1432.300px;top:659.05px;color:#111">EA</span>
<svg style="left:704px;top:659.65px" width="11" height="11" viewBox="0 0 8 8"><rect width="8" height="8" fill="#646464"/><path d="M2.2 4h3.6M4 2.2v3.6" stroke="#fff" stroke-width="1.2"/></svg>
<svg style="left:748px;top:657.25px" width="19.500" height="19.500" viewBox="0 0 19.500 19.500"><rect x=".5" y=".5" width="18.500" height="18.500" fill="#fff" stroke="#ababab"/></svg>
<span class="t d" style="left:802.500px;top:688.60px;color:#111;letter-spacing:.6px;">4.7</span>
<span class="t d" style="left:913.4px;top:688.60px;color:#111">Pipe Rack</span>
<span class="t d" style="left:1300px;width:117px;text-align:right;top:688.60px;color:#111">2.00</span>
<span class="t d" style="left:1432.300px;top:688.60px;color:#111">EA</span>
<svg style="left:704px;top:689.2px" width="11" height="11" viewBox="0 0 8 8"><rect width="8" height="8" fill="#646464"/><path d="M2.2 4h3.6M4 2.2v3.6" stroke="#fff" stroke-width="1.2"/></svg>
<svg style="left:748px;top:686.80px" width="19.500" height="19.500" viewBox="0 0 19.500 19.500"><rect x=".5" y=".5" width="18.500" height="18.500" fill="#fff" stroke="#ababab"/></svg>
<span class="t d" style="left:802.500px;top:718.15px;color:#111;letter-spacing:.6px;">4.8</span>
<span class="t d" style="left:913.4px;top:718.15px;color:#111">Cooling Tower (CT)</span>
<span class="t d" style="left:1300px;width:117px;text-align:right;top:718.15px;color:#111">2.00</span>
<span class="t d" style="left:1432.300px;top:718.15px;color:#111">EA</span>
<svg style="left:704px;top:718.75px" width="11" height="11" viewBox="0 0 8 8"><rect width="8" height="8" fill="#646464"/><path d="M1.9 4h4.2" stroke="#fff" stroke-width="1.3"/></svg>
<svg style="left:748px;top:716.35px" width="19.500" height="19.500" viewBox="0 0 19.500 19.500"><rect x=".5" y=".5" width="18.500" height="18.500" fill="#fff" stroke="#ababab"/><path d="M4.500 10l3.600 4.200 6.400-9.200" fill="none" stroke="#111" stroke-width="1.250"/></svg>
<span class="t d" style="left:802.500px;top:747.70px;color:#111;letter-spacing:.6px;">4.8.1</span>
<span class="t d" style="left:928.8px;top:747.70px;color:#111">Earthwork</span>
<span class="t d" style="left:1300px;width:117px;text-align:right;top:747.70px;color:#111">16,000.00</span>
<span class="t d" style="left:1432.300px;top:747.70px;color:#111">CY</span>
<svg style="left:704px;top:748.3px" width="11" height="11" viewBox="0 0 8 8"><rect width="8" height="8" fill="#646464"/><path d="M1.9 4h4.2" stroke="#fff" stroke-width="1.3"/></svg>
<svg style="left:748px;top:745.90px" width="19.500" height="19.500" viewBox="0 0 19.500 19.500"><rect x=".5" y=".5" width="18.500" height="18.500" fill="#fff" stroke="#ababab"/><path d="M4.500 10l3.600 4.200 6.400-9.200" fill="none" stroke="#111" stroke-width="1.250"/></svg>
<span class="t d" style="left:802.500px;top:777.25px;color:#111;letter-spacing:.6px;">4.8.1.1</span>
<span class="t d" style="left:944.2px;top:777.25px;color:#111">Cooling Tower and Sumps&nbsp; Foundation Exc...</span>
<span class="t d" style="left:1300px;width:117px;text-align:right;top:777.25px;color:#111">16,000.00</span>
<span class="t d" style="left:1432.300px;top:777.25px;color:#111">CY</span>
<svg style="left:704px;top:777.85px" width="11" height="11" viewBox="0 0 8 8"><rect width="8" height="8" fill="#646464"/><path d="M2.2 4h3.6M4 2.2v3.6" stroke="#fff" stroke-width="1.2"/></svg>
<svg style="left:748px;top:775.45px" width="19.500" height="19.500" viewBox="0 0 19.500 19.500"><rect x=".5" y=".5" width="18.500" height="18.500" fill="#fff" stroke="#ababab"/><path d="M4.500 10l3.600 4.200 6.400-9.200" fill="none" stroke="#111" stroke-width="1.250"/></svg>
<span class="t d" style="left:802.500px;top:806.80px;color:#111;letter-spacing:.6px;">4.8.1.2</span>
<span class="t d" style="left:944.2px;top:806.80px;color:#111">Earthwork Supplies, Materials, Subcontracts</span>
<span class="t d" style="left:1300px;width:117px;text-align:right;top:806.80px;color:#111">1.00</span>
<span class="t d" style="left:1432.300px;top:806.80px;color:#111">Lump Sum</span>
<svg style="left:704px;top:807.4px" width="11" height="11" viewBox="0 0 8 8"><rect width="8" height="8" fill="#646464"/><path d="M2.2 4h3.6M4 2.2v3.6" stroke="#fff" stroke-width="1.2"/></svg>
<svg style="left:748px;top:805.00px" width="19.500" height="19.500" viewBox="0 0 19.500 19.500"><rect x=".5" y=".5" width="18.500" height="18.500" fill="#fff" stroke="#ababab"/><path d="M4.500 10l3.600 4.200 6.400-9.200" fill="none" stroke="#111" stroke-width="1.250"/></svg>
<span class="t d" style="left:802.500px;top:836.35px;color:#111;letter-spacing:.6px;">4.8.2</span>
<span class="t d" style="left:928.8px;top:836.35px;color:#111">Concrete</span>
<span class="t d" style="left:1300px;width:117px;text-align:right;top:836.35px;color:#111">4,520.00</span>
<span class="t d" style="left:1432.300px;top:836.35px;color:#111">CY</span>
<svg style="left:704px;top:836.95px" width="11" height="11" viewBox="0 0 8 8"><rect width="8" height="8" fill="#646464"/><path d="M1.9 4h4.2" stroke="#fff" stroke-width="1.3"/></svg>
<svg style="left:748px;top:834.55px" width="19.500" height="19.500" viewBox="0 0 19.500 19.500"><rect x=".5" y=".5" width="18.500" height="18.500" fill="#fff" stroke="#ababab"/><path d="M4.500 10l3.600 4.200 6.400-9.200" fill="none" stroke="#111" stroke-width="1.250"/></svg>
<span class="t d" style="left:802.500px;top:865.90px;color:#111;letter-spacing:.6px;">4.8.2.1</span>
<span class="t d" style="left:944.2px;top:865.90px;color:#111">Place Mudmat</span>
<span class="t d" style="left:1300px;width:117px;text-align:right;top:865.90px;color:#111">800.00</span>
<span class="t d" style="left:1432.300px;top:865.90px;color:#111">CY</span>
<svg style="left:704px;top:866.5px" width="11" height="11" viewBox="0 0 8 8"><rect width="8" height="8" fill="#646464"/><path d="M2.2 4h3.6M4 2.2v3.6" stroke="#fff" stroke-width="1.2"/></svg>
<svg style="left:748px;top:864.10px" width="19.500" height="19.500" viewBox="0 0 19.500 19.500"><rect x=".5" y=".5" width="18.500" height="18.500" fill="#fff" stroke="#ababab"/><path d="M4.500 10l3.600 4.200 6.400-9.200" fill="none" stroke="#111" stroke-width="1.250"/></svg>
<span class="t d" style="left:802.500px;top:895.45px;color:#111;letter-spacing:.6px;">4.8.2.2</span>
<span class="t d" style="left:944.2px;top:895.45px;color:#111">Install Foundations</span>
<span class="t d" style="left:1300px;width:117px;text-align:right;top:895.45px;color:#111">4,520.00</span>
<span class="t d" style="left:1432.300px;top:895.45px;color:#111">CY</span>
<svg style="left:704px;top:896.05px" width="11" height="11" viewBox="0 0 8 8"><rect width="8" height="8" fill="#646464"/><path d="M2.2 4h3.6M4 2.2v3.6" stroke="#fff" stroke-width="1.2"/></svg>
<svg style="left:748px;top:893.65px" width="19.500" height="19.500" viewBox="0 0 19.500 19.500"><rect x=".5" y=".5" width="18.500" height="18.500" fill="#fff" stroke="#ababab"/><path d="M4.500 10l3.600 4.200 6.400-9.200" fill="none" stroke="#111" stroke-width="1.250"/></svg>
<svg style="left:676.2px;top:720.2px" width="12.2" height="12.2" viewBox="0 0 11 11"><path d="M1 10l.5-2.300 6.500-6.500 1.800 1.800-6.500 6.500z" fill="#3a3a3a"/></svg>
<div style="left:692px;top:711px;width:900px;height:214px;border:5px solid #f00"></div>
</div>
</body></html>
